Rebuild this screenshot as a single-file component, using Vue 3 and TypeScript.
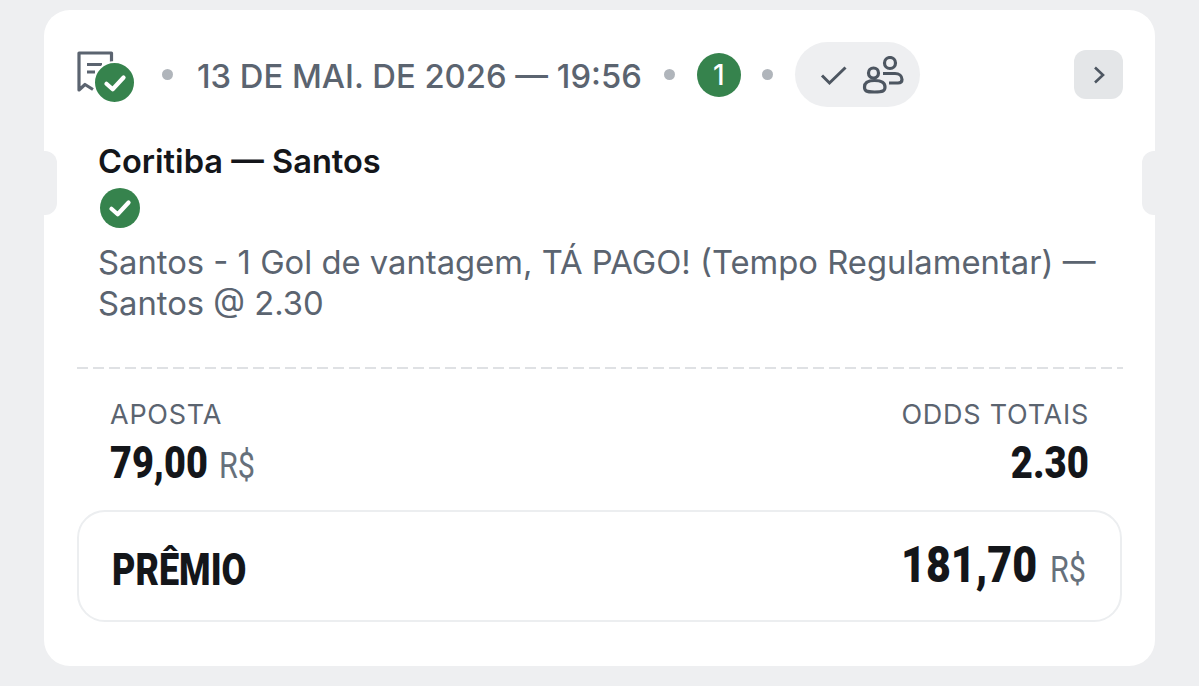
<script setup lang="ts">
const market = "Santos - 1 Gol de vantagem, TÁ PAGO! (Tempo Regulamentar) — Santos @ 2.30";
</script>

<template>
    <div class="page">
        <section class="card">
            <span class="notch notch_left"></span>
            <span class="notch notch_right"></span>

            <header class="head">
                <span class="ticket">
                    <svg class="ticket__icon" width="38" height="44" viewBox="0 0 38 44" fill="none" stroke="#5b6470" stroke-width="3.2">
                        <path d="M34.500 24V2H2V39L8 33.500L16 38.500" stroke-linejoin="round" />
                        <path d="M10 13.500H25M10 21H18" />
                    </svg>
                    <span class="ticket__badge">
                        <svg width="28" height="28" viewBox="0 0 18 18" fill="none" stroke="#fff" stroke-width="2.700" stroke-linecap="round" stroke-linejoin="round">
                            <path d="M3.500 9.500L7.500 13L14.500 5.500" />
                        </svg>
                    </span>
                </span>
                <i class="dot"></i>
                <span class="date">13 DE MAI. DE 2026 — 19:56</span>
                <i class="dot"></i>
                <span class="count">1</span>
                <i class="dot"></i>
                <span class="pill">
                    <svg width="28" height="22" viewBox="0 0 28 22" fill="none" stroke="#4d5661" stroke-width="3">
                        <path d="M2 11.500L9.500 19L25.500 3.500" />
                    </svg>
                    <svg width="42" height="38" viewBox="0 0 42 38" fill="none" stroke="#4d5661" stroke-width="3.200">
                        <circle cx="11.500" cy="17" r="5" />
                        <circle cx="28" cy="7" r="5.500" />
                        <path d="M2.500 31C2.500 26.500 6.500 24.500 12.500 24.500S23 26.500 23 31C23 35 21 36 12.500 36S2.500 35 2.500 31Z" />
                        <path d="M21 17.500H33C37 17.500 40 20 40 23.500C40 26 38.500 27 36 27H27" />
                    </svg>
                </span>
                <button class="next" type="button" aria-label="Abrir">
                    <svg width="14" height="20" viewBox="0 0 14 20" fill="none" stroke="#4d5661" stroke-width="2.600">
                        <path d="M3 2.500L11 10L3 17.500" />
                    </svg>
                </button>
            </header>

            <div class="event">
                <h3 class="event__title">Coritiba — Santos</h3>
                <span class="event__check">
                    <svg width="28" height="28" viewBox="0 0 18 18" fill="none" stroke="#fff" stroke-width="2.700" stroke-linecap="round" stroke-linejoin="round">
                        <path d="M3.500 9.500L7.500 13L14.500 5.500" />
                    </svg>
                </span>
                <p class="event__market">{{ market }}</p>
            </div>

            <div class="divider"></div>

            <div class="stats">
                <div class="stat">
                    <span class="stat__label">APOSTA</span>
                    <span class="stat__value"><b>79,00</b><small>R$</small></span>
                </div>
                <div class="stat stat_end">
                    <span class="stat__label">ODDS TOTAIS</span>
                    <span class="stat__value"><b>2.30</b></span>
                </div>
            </div>

            <div class="prize">
                <b class="prize__label">PRÊMIO</b>
                <span class="prize__value"><b>181,70</b><small>R$</small></span>
            </div>
        </section>
    </div>
</template>

<style>
html,
body {
    margin: 0;
    background: #eeeff1;
}
</style>

<style scoped>
.page {
    box-sizing: border-box;
    width: 1199px;
    height: 686px;
    padding: 10px 44px 20px;

    font-family: Inter, "Liberation Sans", sans-serif;
    background: #eeeff1;
    overflow: hidden;
}

.card {
    position: relative;
    box-sizing: border-box;
    height: 656px;
    padding: 32px 32px 0 33px;

    background: #fff;
    border-radius: 26px;
}

.notch {
    position: absolute;
    top: 141px;
    width: 13px;
    height: 64px;
    background: #eeeff1;
}

.notch_left {
    left: 0;
    border-radius: 0 12px 12px 0;
}

.notch_right {
    right: 0;
    border-radius: 12px 0 0 12px;
}

.head {
    display: flex;
    align-items: center;
    height: 65px;
}

.ticket {
    position: relative;
    flex: none;
    width: 58px;
    height: 65px;
}

.ticket__icon {
    position: absolute;
    top: 9px;
    left: 0;
}

.ticket__badge {
    position: absolute;
    top: 19px;
    left: 16px;

    display: flex;
    align-items: center;
    justify-content: center;

    width: 43px;
    height: 43px;
    box-sizing: border-box;

    background: #36834d;
    border: 2px solid #fff;
    border-radius: 50%;
}

.dot {
    flex: none;
    width: 11px;
    height: 11px;
    margin-top: -1px;

    background: #b0b5bb;
    border-radius: 50%;
}

.ticket + .dot {
    margin-left: 27px;
}

.date {
    margin: 2px 22px 0 24px;

    font-size: 32.750px;
    font-weight: 500;
    color: #5b6470;
    white-space: nowrap;
}

.count {
    display: flex;
    flex: none;
    align-items: center;
    justify-content: center;

    width: 44px;
    height: 44px;
    margin: 0 21px 0 22px;

    font-size: 28px;
    font-weight: 500;
    color: #fff;
    background: #36834d;
    border-radius: 50%;
}

.pill {
    display: flex;
    flex: none;
    align-items: center;
    gap: 14px;
    box-sizing: border-box;

    width: 125px;
    height: 65px;
    margin-left: 22px;
    padding-left: 25px;

    background: #eeeff1;
    border-radius: 33px;
}

.next {
    display: flex;
    align-items: center;
    justify-content: center;

    width: 49px;
    height: 49px;
    margin: 0 0 0 auto;
    padding: 0;

    background: #e4e6e8;
    border: 0;
    border-radius: 12px;
}

.event {
    padding: 0 21px;
    margin-top: 36px;
}

.event__title {
    margin: 0;

    font-size: 32.600px;
    font-weight: 600;
    line-height: 36px;
    color: #14161a;
}

.event__check {
    display: flex;
    align-items: center;
    justify-content: center;

    width: 40px;
    height: 40px;
    margin: 9px 0 0 2px;

    background: #36834d;
    border-radius: 50%;
}

.event__market {
    margin: 14px 0 0;

    font-size: 32.770px;
    line-height: 41px;
    color: #5b6470;
}

.divider {
    height: 2px;
    margin-top: 43px;
    background: repeating-linear-gradient(90deg, #dfe1e4 0 11px, transparent 11px 16px);
}

.stats {
    display: flex;
    justify-content: space-between;
    padding: 30px 34px 0 33px;
}

.stat {
    display: flex;
    flex-direction: column;
}

.stat_end {
    align-items: flex-end;
}

.stat__label {
    font-size: 27px;
    line-height: 32px;
    letter-spacing: 0.750px;
    color: #5b6470;
}

.stat__value,
.prize__value {
    display: flex;
    align-items: baseline;

    font-family: Roboto, "Liberation Sans", sans-serif;
    line-height: 50px;
    white-space: nowrap;
}

.stat__value {
    margin-top: 7px;
}

.stat__value b,
.prize__value b,
.prize__label {
    display: inline-block;
    font-weight: 900;
    color: #14161a;
    transform-origin: left center;
}

.stat__value b {
    font-size: 45px;
    transform: scaleX(0.840);
}

.stat_end .stat__value b {
    transform: scaleX(0.850);
    transform-origin: right center;
}

small {
    display: inline-block;
    margin-left: -7px;

    font-size: 36px;
    font-weight: 400;
    color: #66707b;
    transform: scaleX(0.850);
    transform-origin: left center;
}

.prize {
    display: flex;
    align-items: center;
    justify-content: space-between;
    box-sizing: border-box;

    height: 112px;
    margin: 19px 1px 0 0;
    padding: 3px 28px 0 33px;

    border: 2px solid #eceef0;
    border-radius: 28px;
}

.prize__label {
    margin-top: 4px;

    font-family: Roboto, "Liberation Sans", sans-serif;
    font-size: 45px;
    transform: scaleX(0.800);
}

.prize__value b {
    font-size: 50px;
    transform: scaleX(0.860);
}

.prize__value small {
    margin-left: -10px;
}
</style>
